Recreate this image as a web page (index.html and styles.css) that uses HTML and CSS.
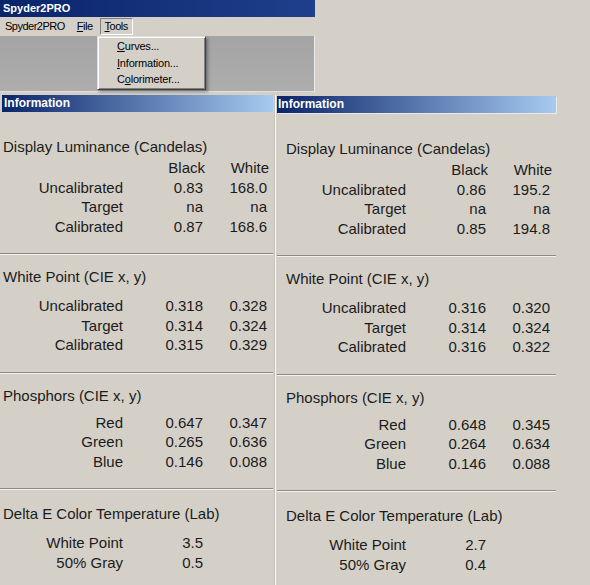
FILE: index.html
```html
<!DOCTYPE html>
<html lang="en">
  <head>
    <meta charset="UTF-8" />
    <meta name="viewport" content="width=device-width, initial-scale=1.0" />
    <title>Spyder2PRO</title>
    <link rel="stylesheet" href="styles.css">
  </head>
  <body>
    <div class="window">
      <div class="caption">Spyder2PRO</div>
      <div class="menubar">
        <span class="menu">Spyder2PRO</span>
        <span class="menu"><u>F</u>ile</span>
        <span class="menu open"><u>T</u>ools</span>
      </div>
      <div class="client"></div>
      <div class="dropdown">
        <div class="item"><u>C</u>urves...</div>
        <div class="item"><u>I</u>nformation...</div>
        <div class="item">C<u>o</u>lorimeter...</div>
      </div>
    </div>

    <div class="panels">
      <div class="panel left">
        <div class="bar">Information</div>
        <div class="section lum">
          <div class="heading">Display Luminance (Candelas)</div>
          <div class="grid">
            <span></span><span class="head">Black</span><span class="head">White</span>
            <span>Uncalibrated</span><span>0.83</span><span>168.0</span>
            <span>Target</span><span>na</span><span>na</span>
            <span>Calibrated</span><span>0.87</span><span>168.6</span>
          </div>
        </div>
        <div class="section wp">
          <div class="heading">White Point (CIE x, y)</div>
          <div class="grid">
            <span>Uncalibrated</span><span>0.318</span><span>0.328</span>
            <span>Target</span><span>0.314</span><span>0.324</span>
            <span>Calibrated</span><span>0.315</span><span>0.329</span>
          </div>
        </div>
        <div class="section phos">
          <div class="heading">Phosphors (CIE x, y)</div>
          <div class="grid">
            <span>Red</span><span>0.647</span><span>0.347</span>
            <span>Green</span><span>0.265</span><span>0.636</span>
            <span>Blue</span><span>0.146</span><span>0.088</span>
          </div>
        </div>
        <div class="section delta">
          <div class="heading">Delta E Color Temperature (Lab)</div>
          <div class="grid two">
            <span>White Point</span><span>3.5</span>
            <span>50% Gray</span><span>0.5</span>
          </div>
        </div>
      </div>

      <div class="divider"></div>

      <div class="panel right">
        <div class="bar">Information</div>
        <div class="section lum">
          <div class="heading">Display Luminance (Candelas)</div>
          <div class="grid">
            <span></span><span class="head">Black</span><span class="head">White</span>
            <span>Uncalibrated</span><span>0.86</span><span>195.2</span>
            <span>Target</span><span>na</span><span>na</span>
            <span>Calibrated</span><span>0.85</span><span>194.8</span>
          </div>
        </div>
        <div class="section wp">
          <div class="heading">White Point (CIE x, y)</div>
          <div class="grid">
            <span>Uncalibrated</span><span>0.316</span><span>0.320</span>
            <span>Target</span><span>0.314</span><span>0.324</span>
            <span>Calibrated</span><span>0.316</span><span>0.322</span>
          </div>
        </div>
        <div class="section phos">
          <div class="heading">Phosphors (CIE x, y)</div>
          <div class="grid">
            <span>Red</span><span>0.648</span><span>0.345</span>
            <span>Green</span><span>0.264</span><span>0.634</span>
            <span>Blue</span><span>0.146</span><span>0.088</span>
          </div>
        </div>
        <div class="section delta">
          <div class="heading">Delta E Color Temperature (Lab)</div>
          <div class="grid two">
            <span>White Point</span><span>2.7</span>
            <span>50% Gray</span><span>0.4</span>
          </div>
        </div>
      </div>
    </div>
  </body>
</html>
```

FILE: styles.css
```css
body {
  margin: 0;
  width: 590px;
  height: 585px;
  overflow: hidden;
  background: #d4d0c8;
  color: #1b1b1b;
  font-family: "Liberation Sans", Arial, sans-serif;
}

/* main app window */
.window {
  position: relative;
  width: 315px;
}
.caption {
  height: 17px;
  line-height: 17px;
  padding-left: 3px;
  background: linear-gradient(to right, #0a246a, #1f3f8c);
  color: #fff;
  font-size: 11px;
  font-weight: bold;
}
.menubar {
  display: flex;
  align-items: center;
  gap: 2px;
  height: 19px;
  font-size: 11px;
  color: #000;
}
.menu {
  padding: 0 4px;
  line-height: 15px;
  border: 1px solid transparent;
  letter-spacing: -0.5px;
}
.menu.open {
  border-color: #808080 #fff #fff #808080;
}
.client {
  height: 55px;
  background: linear-gradient(to bottom, #a4a4a4, #adadad);
  border-right: 1px solid #ecebe7;
  border-bottom: 1px solid #e2e0da;
}

/* Tools drop-down, sits over the client area */
.dropdown {
  position: absolute;
  left: 97px;
  top: 36px;
  width: 109px;
  height: 54px;
  box-sizing: border-box;
  padding-top: 1px;
  background: #d4d0c8;
  border: 1px solid;
  border-color: #e4e2dc #404040 #404040 #e4e2dc;
  box-shadow: inset 1px 1px 0 #fff, inset -1px -1px 0 #808080, 2px 2px 3px rgba(0, 0, 0, 0.35);
  font-size: 11px;
  color: #000;
}
.item {
  padding-left: 19px;
  line-height: 16.5px;
  letter-spacing: -0.2px;
}

/* two Information panels side by side */
.panels {
  display: flex;
  height: 490px;
  margin-top: 3px;
}
.panel.left {
  width: 274px;
}
.panel.right {
  width: 281px;
  margin-top: 1px;
}
.divider {
  width: 1px;
  margin: 0 1px;
  background: #fbfbfa;
  box-shadow: -1px 0 0 #c4c1ba;
}
.bar {
  height: 17px;
  line-height: 17px;
  padding-left: 2px;
  background: linear-gradient(to right, #0a246a, #a6caf0);
  color: #fff;
  font-size: 12px;
  font-weight: bold;
}
.left .bar {
  margin: 0 1px 0 2px;
}
.right .bar {
  margin-right: 2px;
  padding-left: 1px;
  box-shadow: 1px 1px 0 #ebe9e4;
}

.section {
  padding-bottom: 17px;
}
.left .section {
  margin-right: 1px;
  padding-left: 3px;
}
.right .section {
  margin-right: 2px;
  padding-left: 9px;
}
.section + .section {
  border-top: 1px solid #8d8a84;
  box-shadow: inset 0 1px 0 #f2f1ee;
}
.heading {
  font-size: 15px;
  line-height: 20px;
}

.lum {
  padding-top: 25px;
}
.right .lum {
  padding-top: 26px;
}
.lum .heading {
  margin-bottom: 1px;
}
.wp,
.phos {
  padding-top: 13px;
}
.wp .heading {
  margin-bottom: 9px;
}
.phos .heading {
  margin-bottom: 7px;
}
.delta {
  padding-top: 15px;
}
.delta .heading {
  margin-bottom: 9px;
}

.grid {
  display: grid;
  grid-template-columns: 120px 80px 64px;
  font-size: 15px;
  line-height: 19.5px;
  text-align: right;
}
.grid.two {
  grid-template-columns: 120px 80px;
}
.head {
  margin-right: -2px;
}
```
